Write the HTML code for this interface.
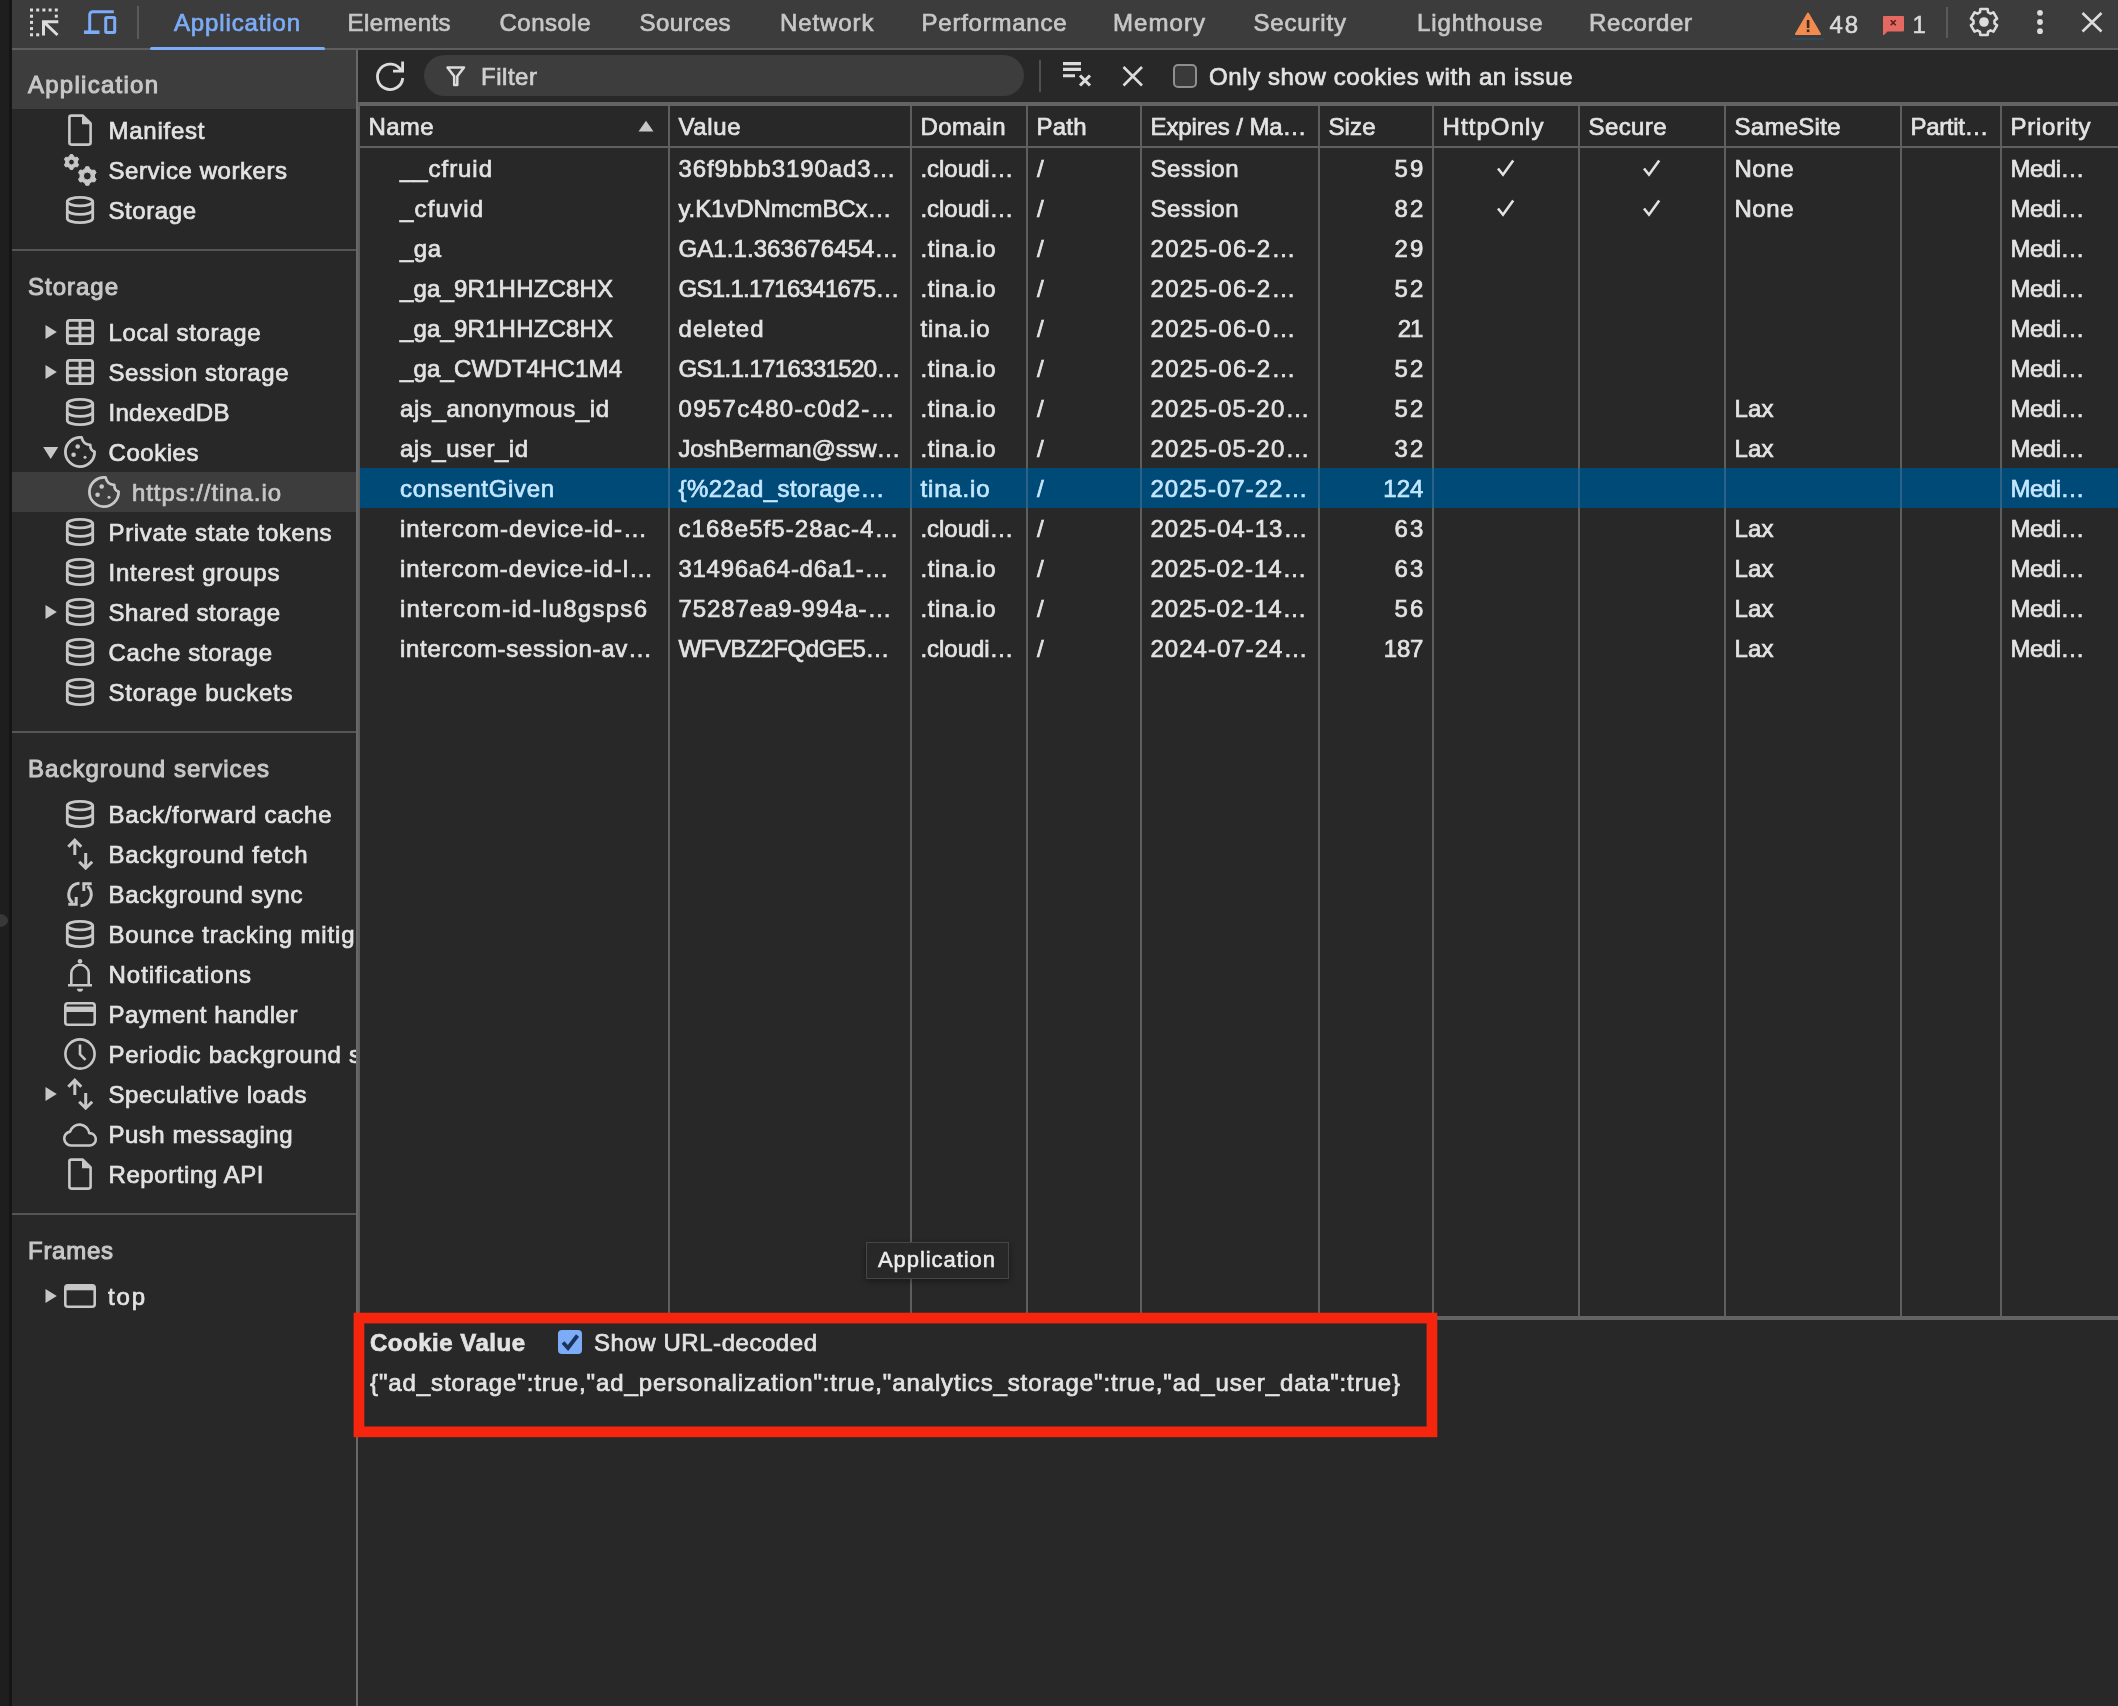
<!DOCTYPE html><html><head><meta charset="utf-8"><title>DevTools</title><style>html,body{margin:0;padding:0;background:#282828;}body{width:2118px;height:1706px;position:relative;overflow:hidden;font-family:"Liberation Sans",sans-serif;font-size:24px;}svg{overflow:visible}</style></head><body>
<div style="position:absolute;left:0px;top:0px;width:2118px;height:1706px;background:#282828;"></div>
<div style="position:absolute;left:0px;top:0px;width:9px;height:1706px;background:#1e1e1e;"></div>
<div style="position:absolute;left:9px;top:0px;width:3px;height:1706px;background:#151515;"></div>
<div style="position:absolute;left:12px;top:0px;width:2106px;height:48px;background:#3c3c3c;"></div>
<div style="position:absolute;left:12px;top:48px;width:2106px;height:2px;background:#5e5e5e;"></div>
<div style="position:absolute;left:12px;top:50px;width:344px;height:59px;background:#3d3d3d;"></div>
<div style="position:absolute;left:356px;top:50px;width:2px;height:1656px;background:#686868;"></div>
<div style="position:absolute;left:358px;top:102px;width:2px;height:1218px;background:#5e5e5e;"></div>
<div style="position:absolute;left:360px;top:102px;width:1758px;height:4px;background:#636363;"></div>
<svg style="position:absolute;left:0px;top:0px" width="70" height="48" viewBox="0 0 70 48" fill="none"><rect x="30" y="8.5" width="3" height="3" fill="#dcdcdc"/><rect x="36.2" y="8.5" width="3" height="3" fill="#dcdcdc"/><rect x="42.4" y="8.5" width="3" height="3" fill="#dcdcdc"/><rect x="48.6" y="8.5" width="3" height="3" fill="#dcdcdc"/><rect x="54.8" y="8.5" width="3" height="3" fill="#dcdcdc"/><rect x="30" y="14.7" width="3" height="3" fill="#dcdcdc"/><rect x="30" y="20.9" width="3" height="3" fill="#dcdcdc"/><rect x="30" y="27.1" width="3" height="3" fill="#dcdcdc"/><rect x="30" y="33.3" width="3" height="3" fill="#dcdcdc"/><rect x="36.2" y="33.3" width="3" height="3" fill="#dcdcdc"/><rect x="54.8" y="14.7" width="3" height="3" fill="#dcdcdc"/><path d="M43.5 35.5V21.7H58.3M44 22.2L57.5 35" stroke="#dcdcdc" stroke-width="3"/></svg>
<svg style="position:absolute;left:0px;top:0px" width="130" height="48" viewBox="0 0 130 48" fill="none"><path d="M113.8 11.8H92.700a3 3 0 0 0-3 3V31" stroke="#7cacf8" stroke-width="3"/><path d="M84 32.2H99.5" stroke="#7cacf8" stroke-width="3.6"/><rect x="105.7" y="17.5" width="9" height="15" rx="1" stroke="#7cacf8" stroke-width="3"/></svg>
<div style="position:absolute;left:137px;top:6px;width:2px;height:33px;background:#5a5a5a;"></div>
<div style="position:absolute;left:150px;top:47px;width:175px;height:3.2px;background:#7cacf8;border-radius:1.600px;"></div>
<svg style="position:absolute;left:1790px;top:8px" width="36" height="32" viewBox="0 0 36 32" fill="none"><path d="M18 5.5L30 26H6Z" fill="#f28b50" stroke="#f28b50" stroke-width="2" stroke-linejoin="round"/><rect x="16.8" y="12" width="2.6" height="8" fill="#3c2a20"/><rect x="16.8" y="21.5" width="2.6" height="2.6" fill="#3c2a20"/></svg>
<div style="position:absolute;left:1792px;top:37.5px;width:32px;height:2px;background:#30485a;"></div>
<svg style="position:absolute;left:1878px;top:10px" width="32" height="30" viewBox="0 0 32 30" fill="none"><path d="M5.5 6.5H25.5V21H9.5L5.5 25Z" fill="#e46962" stroke="#e46962" stroke-width="1" stroke-linejoin="round"/><path d="M12.7 10.3l5 5m0-5l-5 5" stroke="#5a1f1c" stroke-width="1.6"/></svg>
<div style="position:absolute;left:1946px;top:7px;width:2px;height:31px;background:#5a5a5a;"></div>
<svg style="position:absolute;left:1964px;top:2px" width="40" height="40" viewBox="0 0 40 40" fill="none"><path d="M15.99 10.19L16.37 7.00L23.63 7.00L24.01 10.19L26.50 11.62L29.45 10.35L33.08 16.64L30.50 18.56L30.50 21.44L33.08 23.36L29.45 29.65L26.50 28.38L24.01 29.81L23.63 33.00L16.37 33.00L15.99 29.81L13.50 28.38L10.55 29.65L6.92 23.36L9.50 21.44L9.50 18.56L6.92 16.64L10.55 10.35L13.50 11.62Z" stroke="#dcdcdc" stroke-width="2.6" stroke-linejoin="round"/><circle cx="20" cy="20" r="4.8" fill="#dcdcdc"/></svg>
<svg style="position:absolute;left:2030px;top:4px" width="20" height="40" viewBox="0 0 20 40" fill="none"><circle cx="10" cy="8.8" r="2.9" fill="#dcdcdc"/><circle cx="10" cy="18" r="2.9" fill="#dcdcdc"/><circle cx="10" cy="27.2" r="2.9" fill="#dcdcdc"/></svg>
<svg style="position:absolute;left:2076px;top:6px" width="32" height="32" viewBox="0 0 32 32" fill="none"><path d="M6.5 7L25.5 25.5M25.5 7L6.5 25.5" stroke="#dcdcdc" stroke-width="2.6"/></svg>
<svg style="position:absolute;left:370px;top:56px" width="40" height="40" viewBox="0 0 40 40" fill="none"><path d="M31.2 14.5A12.7 12.7 0 1 0 32.8 22" stroke="#dcdcdc" stroke-width="2.8"/><path d="M32.6 5.5V15.2H23" stroke="#dcdcdc" stroke-width="2.8"/></svg>
<div style="position:absolute;left:424px;top:55px;width:600px;height:41px;background:#3d3d3d;border-radius:21px;"></div>
<svg style="position:absolute;left:440px;top:60px" width="32" height="32" viewBox="0 0 32 32" fill="none"><path d="M7.5 7.5H24L17.3 16.3V25H14.2V16.3Z" stroke="#dcdcdc" stroke-width="2.5" stroke-linejoin="round"/></svg>
<div style="position:absolute;left:1039px;top:60px;width:2px;height:32px;background:#505050;"></div>
<svg style="position:absolute;left:1058px;top:56px" width="40" height="40" viewBox="0 0 40 40" fill="none"><path d="M5 7.600H23M5 13.400H23M5 19.800H17" stroke="#dcdcdc" stroke-width="3.1"/><path d="M22 19.500l10 10m0-10L22 29.500" stroke="#dcdcdc" stroke-width="3.1"/></svg>
<svg style="position:absolute;left:1116px;top:60px" width="32" height="32" viewBox="0 0 32 32" fill="none"><path d="M7.5 7L26 25.5M26 7L7.5 25.5" stroke="#dcdcdc" stroke-width="2.6"/></svg>
<div style="position:absolute;left:1173px;top:64px;width:20px;height:20px;border:2px solid #8f8f8f;border-radius:5px;background:#3a3a3a"></div>
<svg style="position:absolute;left:60px;top:110px" width="40" height="40" viewBox="0 0 40 40" fill="none"><path d="M9.4 7.6a2 2 0 0 1 2-2H22.8L30.6 13.4V32.6a2 2 0 0 1-2 2H11.4a2 2 0 0 1-2-2Z" stroke="#c7c7c7" stroke-width="2.6" stroke-linejoin="round"/><path d="M22 5.6V14.2H30.6Z" fill="#c7c7c7"/></svg>
<svg style="position:absolute;left:60px;top:150px" width="40" height="40" viewBox="0 0 40 40" fill="none"><path d="M9.39 6.54L10.31 4.54L12.69 4.54L13.61 6.54L15.21 7.46L17.41 7.27L18.60 9.33L17.33 11.13L17.33 12.97L18.60 14.77L17.41 16.83L15.21 16.64L13.61 17.56L12.69 19.56L10.31 19.56L9.39 17.56L7.79 16.64L5.59 16.83L4.40 14.77L5.67 12.97L5.67 11.13L4.40 9.33L5.59 7.27L7.79 7.46Z M8.60 12.05 a2.9 2.9 0 1 0 5.8 0 a2.9 2.9 0 1 0 -5.8 0Z" fill="#c7c7c7" stroke="#c7c7c7" stroke-width="1" stroke-linejoin="round" fill-rule="evenodd"/><path d="M24.68 19.18L25.83 16.72L28.77 16.72L29.92 19.18L31.89 20.33L34.61 20.08L36.08 22.63L34.51 24.86L34.51 27.14L36.08 29.37L34.61 31.92L31.89 31.67L29.92 32.82L28.77 35.28L25.83 35.28L24.68 32.82L22.71 31.67L19.99 31.92L18.52 29.37L20.09 27.14L20.09 24.86L18.52 22.63L19.99 20.08L22.71 20.33Z M23.40 26.00 a3.9 3.9 0 1 0 7.8 0 a3.9 3.9 0 1 0 -7.8 0Z" fill="#c7c7c7" stroke="#c7c7c7" stroke-width="1" stroke-linejoin="round" fill-rule="evenodd"/></svg>
<svg style="position:absolute;left:60px;top:190px" width="40" height="40" viewBox="0 0 40 40" fill="none"><ellipse cx="20" cy="11.6" rx="12.7" ry="4.3" stroke="#c7c7c7" stroke-width="2.8"/><path d="M7.3 11.6V28.4c0 2.4 5.7 4.3 12.7 4.3s12.7-1.9 12.7-4.3V11.6" stroke="#c7c7c7" stroke-width="2.8"/><path d="M7.3 20c0 2.4 5.7 4.3 12.7 4.3s12.7-1.9 12.7-4.3" stroke="#c7c7c7" stroke-width="2.8"/></svg>
<div style="position:absolute;left:12px;top:249px;width:344px;height:2px;background:#555555;"></div>
<div style="position:absolute;left:12px;top:472px;width:344px;height:40px;background:#3d3d3d;"></div>
<svg style="position:absolute;left:60px;top:312px" width="40" height="40" viewBox="0 0 40 40" fill="none"><rect x="7.4" y="8.4" width="25.2" height="23.2" rx="2.5" stroke="#c7c7c7" stroke-width="2.9"/><path d="M20 8.4V31.6M7.4 16.2H32.6M7.4 23.8H32.6" stroke="#c7c7c7" stroke-width="2.9"/></svg>
<svg style="position:absolute;left:40px;top:320px" width="24" height="24" viewBox="0 0 24 24" fill="none"><path d="M5.500 5L16.800 12L5.500 19Z" fill="#c7c7c7"/></svg>
<svg style="position:absolute;left:60px;top:352px" width="40" height="40" viewBox="0 0 40 40" fill="none"><rect x="7.4" y="8.4" width="25.2" height="23.2" rx="2.5" stroke="#c7c7c7" stroke-width="2.9"/><path d="M20 8.4V31.6M7.4 16.2H32.6M7.4 23.8H32.6" stroke="#c7c7c7" stroke-width="2.9"/></svg>
<svg style="position:absolute;left:40px;top:360px" width="24" height="24" viewBox="0 0 24 24" fill="none"><path d="M5.500 5L16.800 12L5.500 19Z" fill="#c7c7c7"/></svg>
<svg style="position:absolute;left:60px;top:392px" width="40" height="40" viewBox="0 0 40 40" fill="none"><ellipse cx="20" cy="11.6" rx="12.7" ry="4.3" stroke="#c7c7c7" stroke-width="2.8"/><path d="M7.3 11.6V28.4c0 2.4 5.7 4.3 12.7 4.3s12.7-1.9 12.7-4.3V11.6" stroke="#c7c7c7" stroke-width="2.8"/><path d="M7.3 20c0 2.4 5.7 4.3 12.7 4.3s12.7-1.9 12.7-4.3" stroke="#c7c7c7" stroke-width="2.8"/></svg>
<svg style="position:absolute;left:60px;top:432px" width="40" height="40" viewBox="0 0 40 40" fill="none"><path d="M21.6 5.5A14.6 14.6 0 1 0 34.6 19.6Q30.400 19 30.200 12.800Q23.500 13 21.600 5.500Z" stroke="#c7c7c7" stroke-width="2.8" stroke-linejoin="round"/><circle cx="17.7" cy="14.5" r="2.3" fill="#c7c7c7"/><circle cx="13.6" cy="22.7" r="2.3" fill="#c7c7c7"/><circle cx="25" cy="25.2" r="1.5" fill="#c7c7c7"/></svg>
<svg style="position:absolute;left:38px;top:440px" width="26" height="24" viewBox="0 0 26 24" fill="none"><path d="M5.200 7H20.200L12.700 19Z" fill="#c7c7c7"/></svg>
<svg style="position:absolute;left:60px;top:512px" width="40" height="40" viewBox="0 0 40 40" fill="none"><ellipse cx="20" cy="11.6" rx="12.7" ry="4.3" stroke="#c7c7c7" stroke-width="2.8"/><path d="M7.3 11.6V28.4c0 2.4 5.7 4.3 12.7 4.3s12.7-1.9 12.7-4.3V11.6" stroke="#c7c7c7" stroke-width="2.8"/><path d="M7.3 20c0 2.4 5.7 4.3 12.7 4.3s12.7-1.9 12.7-4.3" stroke="#c7c7c7" stroke-width="2.8"/></svg>
<svg style="position:absolute;left:60px;top:552px" width="40" height="40" viewBox="0 0 40 40" fill="none"><ellipse cx="20" cy="11.6" rx="12.7" ry="4.3" stroke="#c7c7c7" stroke-width="2.8"/><path d="M7.3 11.6V28.4c0 2.4 5.7 4.3 12.7 4.3s12.7-1.9 12.7-4.3V11.6" stroke="#c7c7c7" stroke-width="2.8"/><path d="M7.3 20c0 2.4 5.7 4.3 12.7 4.3s12.7-1.9 12.7-4.3" stroke="#c7c7c7" stroke-width="2.8"/></svg>
<svg style="position:absolute;left:60px;top:592px" width="40" height="40" viewBox="0 0 40 40" fill="none"><ellipse cx="20" cy="11.6" rx="12.7" ry="4.3" stroke="#c7c7c7" stroke-width="2.8"/><path d="M7.3 11.6V28.4c0 2.4 5.7 4.3 12.7 4.3s12.7-1.9 12.7-4.3V11.6" stroke="#c7c7c7" stroke-width="2.8"/><path d="M7.3 20c0 2.4 5.7 4.3 12.7 4.3s12.7-1.9 12.7-4.3" stroke="#c7c7c7" stroke-width="2.8"/></svg>
<svg style="position:absolute;left:40px;top:600px" width="24" height="24" viewBox="0 0 24 24" fill="none"><path d="M5.500 5L16.800 12L5.500 19Z" fill="#c7c7c7"/></svg>
<svg style="position:absolute;left:60px;top:632px" width="40" height="40" viewBox="0 0 40 40" fill="none"><ellipse cx="20" cy="11.6" rx="12.7" ry="4.3" stroke="#c7c7c7" stroke-width="2.8"/><path d="M7.3 11.6V28.4c0 2.4 5.7 4.3 12.7 4.3s12.7-1.9 12.7-4.3V11.6" stroke="#c7c7c7" stroke-width="2.8"/><path d="M7.3 20c0 2.4 5.7 4.3 12.7 4.3s12.7-1.9 12.7-4.3" stroke="#c7c7c7" stroke-width="2.8"/></svg>
<svg style="position:absolute;left:60px;top:672px" width="40" height="40" viewBox="0 0 40 40" fill="none"><ellipse cx="20" cy="11.6" rx="12.7" ry="4.3" stroke="#c7c7c7" stroke-width="2.8"/><path d="M7.3 11.6V28.4c0 2.4 5.7 4.3 12.7 4.3s12.7-1.9 12.7-4.3V11.6" stroke="#c7c7c7" stroke-width="2.8"/><path d="M7.3 20c0 2.4 5.7 4.3 12.7 4.3s12.7-1.9 12.7-4.3" stroke="#c7c7c7" stroke-width="2.8"/></svg>
<svg style="position:absolute;left:84px;top:472px" width="40" height="40" viewBox="0 0 40 40" fill="none"><path d="M21.6 5.5A14.6 14.6 0 1 0 34.6 19.6Q30.400 19 30.200 12.800Q23.500 13 21.600 5.500Z" stroke="#c7c7c7" stroke-width="2.8" stroke-linejoin="round"/><circle cx="17.7" cy="14.5" r="2.3" fill="#c7c7c7"/><circle cx="13.6" cy="22.7" r="2.3" fill="#c7c7c7"/><circle cx="25" cy="25.2" r="1.5" fill="#c7c7c7"/></svg>
<div style="position:absolute;left:12px;top:731px;width:344px;height:2px;background:#555555;"></div>
<svg style="position:absolute;left:60px;top:794px" width="40" height="40" viewBox="0 0 40 40" fill="none"><ellipse cx="20" cy="11.6" rx="12.7" ry="4.3" stroke="#c7c7c7" stroke-width="2.8"/><path d="M7.3 11.6V28.4c0 2.4 5.7 4.3 12.7 4.3s12.7-1.9 12.7-4.3V11.6" stroke="#c7c7c7" stroke-width="2.8"/><path d="M7.3 20c0 2.4 5.7 4.3 12.7 4.3s12.7-1.9 12.7-4.3" stroke="#c7c7c7" stroke-width="2.8"/></svg>
<svg style="position:absolute;left:60px;top:834px" width="40" height="40" viewBox="0 0 40 40" fill="none"><path d="M14.800 21V6.5M8.300 12.700L14.800 6.200L21.300 12.700" stroke="#c7c7c7" stroke-width="3"/><path d="M25.700 19V34M19.200 27.700L25.700 34.200L32.200 27.700" stroke="#c7c7c7" stroke-width="3"/></svg>
<svg style="position:absolute;left:60px;top:874px" width="40" height="40" viewBox="0 0 40 40" fill="none"><path d="M19.5 9.300A11.200 11.200 0 0 0 12.600 28.900" stroke="#c7c7c7" stroke-width="3"/><path d="M8.300 30.300H16.200V23" stroke="#c7c7c7" stroke-width="3"/><path d="M20.500 31.700A11.200 11.200 0 0 0 27.400 12.100" stroke="#c7c7c7" stroke-width="3"/><path d="M31.700 9.700H23.800V17" stroke="#c7c7c7" stroke-width="3"/></svg>
<svg style="position:absolute;left:60px;top:914px" width="40" height="40" viewBox="0 0 40 40" fill="none"><ellipse cx="20" cy="11.6" rx="12.7" ry="4.3" stroke="#c7c7c7" stroke-width="2.8"/><path d="M7.3 11.6V28.4c0 2.4 5.7 4.3 12.7 4.3s12.7-1.9 12.7-4.3V11.6" stroke="#c7c7c7" stroke-width="2.8"/><path d="M7.3 20c0 2.4 5.7 4.3 12.7 4.3s12.7-1.9 12.7-4.3" stroke="#c7c7c7" stroke-width="2.8"/></svg>
<svg style="position:absolute;left:60px;top:954px" width="40" height="40" viewBox="0 0 40 40" fill="none"><path d="M8 31.300H32M11.300 31V19.500a8.700 8.700 0 0 1 17.400 0V31" stroke="#c7c7c7" stroke-width="2.6" stroke-linejoin="round"/><circle cx="20" cy="7.300" r="2.300" fill="#c7c7c7"/><path d="M17 34.800H23a3 3 0 0 1-6 0Z" fill="#c7c7c7"/></svg>
<svg style="position:absolute;left:60px;top:994px" width="40" height="40" viewBox="0 0 40 40" fill="none"><rect x="5.300" y="9.300" width="29.400" height="21.400" rx="2.500" stroke="#c7c7c7" stroke-width="2.6"/><rect x="5.300" y="12.600" width="29.400" height="5.400" fill="#c7c7c7"/></svg>
<svg style="position:absolute;left:60px;top:1034px" width="40" height="40" viewBox="0 0 40 40" fill="none"><circle cx="20" cy="20" r="14.600" stroke="#c7c7c7" stroke-width="2.6"/><path d="M20 10.500V20.300L25.500 25.800" stroke="#c7c7c7" stroke-width="2.6"/></svg>
<svg style="position:absolute;left:60px;top:1074px" width="40" height="40" viewBox="0 0 40 40" fill="none"><path d="M14.800 21V6.5M8.300 12.700L14.800 6.200L21.300 12.700" stroke="#c7c7c7" stroke-width="3"/><path d="M25.700 19V34M19.200 27.700L25.700 34.200L32.200 27.700" stroke="#c7c7c7" stroke-width="3"/></svg>
<svg style="position:absolute;left:40px;top:1082px" width="24" height="24" viewBox="0 0 24 24" fill="none"><path d="M5.500 5L16.800 12L5.500 19Z" fill="#c7c7c7"/></svg>
<svg style="position:absolute;left:60px;top:1114px" width="40" height="40" viewBox="0 0 40 40" fill="none"><path d="M11 31.500a7 7 0 0 1-.9-13.900a9.800 9.800 0 0 1 19.100 1.500a6.200 6.200 0 0 1 .8 12.400Z" stroke="#c7c7c7" stroke-width="2.6" stroke-linejoin="round"/></svg>
<svg style="position:absolute;left:60px;top:1154px" width="40" height="40" viewBox="0 0 40 40" fill="none"><path d="M9.4 7.6a2 2 0 0 1 2-2H22.8L30.6 13.4V32.6a2 2 0 0 1-2 2H11.4a2 2 0 0 1-2-2Z" stroke="#c7c7c7" stroke-width="2.6" stroke-linejoin="round"/><path d="M22 5.6V14.2H30.6Z" fill="#c7c7c7"/></svg>
<div style="position:absolute;left:12px;top:1213px;width:344px;height:2px;background:#555555;"></div>
<svg style="position:absolute;left:60px;top:1276px" width="40" height="40" viewBox="0 0 40 40" fill="none"><rect x="5.300" y="9.300" width="29.400" height="21.400" rx="2.500" stroke="#c7c7c7" stroke-width="2.6"/><rect x="5.300" y="9.300" width="29.400" height="5" fill="#c7c7c7"/></svg>
<svg style="position:absolute;left:40px;top:1284px" width="24" height="24" viewBox="0 0 24 24" fill="none"><path d="M5.500 5L16.800 12L5.500 19Z" fill="#c7c7c7"/></svg>
<div style="position:absolute;left:-8px;top:913.500px;width:16px;height:13px;border-radius:50%;background:#383838"></div>
<div style="position:absolute;left:668px;top:106px;width:2px;height:1210px;background:#5e5e5e;"></div>
<div style="position:absolute;left:910px;top:106px;width:2px;height:1210px;background:#5e5e5e;"></div>
<div style="position:absolute;left:1026px;top:106px;width:2px;height:1210px;background:#5e5e5e;"></div>
<div style="position:absolute;left:1140px;top:106px;width:2px;height:1210px;background:#5e5e5e;"></div>
<div style="position:absolute;left:1318px;top:106px;width:2px;height:1210px;background:#5e5e5e;"></div>
<div style="position:absolute;left:1432px;top:106px;width:2px;height:1210px;background:#5e5e5e;"></div>
<div style="position:absolute;left:1578px;top:106px;width:2px;height:1210px;background:#5e5e5e;"></div>
<div style="position:absolute;left:1724px;top:106px;width:2px;height:1210px;background:#5e5e5e;"></div>
<div style="position:absolute;left:1900px;top:106px;width:2px;height:1210px;background:#5e5e5e;"></div>
<div style="position:absolute;left:2000px;top:106px;width:2px;height:1210px;background:#5e5e5e;"></div>
<div style="position:absolute;left:360px;top:146px;width:1758px;height:2px;background:#606060;"></div>
<div style="position:absolute;left:360px;top:1316px;width:1758px;height:4px;background:#636363;"></div>
<div style="position:absolute;left:360px;top:468px;width:1758px;height:40px;background:#004a77;"></div>
<div style="position:absolute;left:668px;top:468px;width:2px;height:40px;background:#2d6288;"></div>
<div style="position:absolute;left:910px;top:468px;width:2px;height:40px;background:#2d6288;"></div>
<div style="position:absolute;left:1026px;top:468px;width:2px;height:40px;background:#2d6288;"></div>
<div style="position:absolute;left:1140px;top:468px;width:2px;height:40px;background:#2d6288;"></div>
<div style="position:absolute;left:1318px;top:468px;width:2px;height:40px;background:#2d6288;"></div>
<div style="position:absolute;left:1432px;top:468px;width:2px;height:40px;background:#2d6288;"></div>
<div style="position:absolute;left:1578px;top:468px;width:2px;height:40px;background:#2d6288;"></div>
<div style="position:absolute;left:1724px;top:468px;width:2px;height:40px;background:#2d6288;"></div>
<div style="position:absolute;left:1900px;top:468px;width:2px;height:40px;background:#2d6288;"></div>
<div style="position:absolute;left:2000px;top:468px;width:2px;height:40px;background:#2d6288;"></div>
<svg style="position:absolute;left:634px;top:116px" width="24" height="20" viewBox="0 0 24 20" fill="none"><path d="M4.500 15.500L12 4.800L19.500 15.500Z" fill="#c7c7c7"/></svg>
<svg style="position:absolute;left:1493px;top:156px" width="24" height="24" viewBox="0 0 24 24" fill="none"><path d="M5 12.500L10 18.700L20.200 4.500" stroke="#e3e3e3" stroke-width="2.6"/></svg>
<svg style="position:absolute;left:1639px;top:156px" width="24" height="24" viewBox="0 0 24 24" fill="none"><path d="M5 12.500L10 18.700L20.200 4.500" stroke="#e3e3e3" stroke-width="2.6"/></svg>
<svg style="position:absolute;left:1493px;top:196px" width="24" height="24" viewBox="0 0 24 24" fill="none"><path d="M5 12.500L10 18.700L20.200 4.500" stroke="#e3e3e3" stroke-width="2.6"/></svg>
<svg style="position:absolute;left:1639px;top:196px" width="24" height="24" viewBox="0 0 24 24" fill="none"><path d="M5 12.500L10 18.700L20.200 4.500" stroke="#e3e3e3" stroke-width="2.6"/></svg>
<div style="position:absolute;left:866px;top:1242px;width:141px;height:35px;background:#282828;border:1px solid #464646;box-shadow:0 2px 6px rgba(0,0,0,.4)"></div>
<div style="position:absolute;left:558px;top:1330px;width:24px;height:24px;border-radius:4px;background:#7cacf8"></div>
<svg style="position:absolute;left:558px;top:1330px" width="24" height="24" viewBox="0 0 24 24" fill="none"><path d="M5 12.500L10 18L19.500 5.500" stroke="#1b3358" stroke-width="3.800"/></svg>
<svg style="position:absolute;left:0px;top:0px" width="2118" height="1706" viewBox="0 0 2118 1706" fill="none"><rect x="358.95" y="1318.05" width="1073" height="113.8" stroke="#f5260d" stroke-width="10.7"/></svg>
<div style="position:absolute;left:0;top:0;width:2118px;height:1706px;will-change:transform">
<div style="position:absolute;top:3px;height:40px;line-height:40px;white-space:pre;font-size:24px;color:#7cacf8;letter-spacing:0.858px;-webkit-text-stroke:0.7px #7cacf8;left:174px;">Application</div>
<div style="position:absolute;top:3px;height:40px;line-height:40px;white-space:pre;font-size:24px;color:#c7c7c7;letter-spacing:0.422px;-webkit-text-stroke:0.7px #c7c7c7;left:347.5px;">Elements</div>
<div style="position:absolute;top:3px;height:40px;line-height:40px;white-space:pre;font-size:24px;color:#c7c7c7;letter-spacing:0.490px;-webkit-text-stroke:0.7px #c7c7c7;left:499.5px;">Console</div>
<div style="position:absolute;top:3px;height:40px;line-height:40px;white-space:pre;font-size:24px;color:#c7c7c7;letter-spacing:0.492px;-webkit-text-stroke:0.7px #c7c7c7;left:639.5px;">Sources</div>
<div style="position:absolute;top:3px;height:40px;line-height:40px;white-space:pre;font-size:24px;color:#c7c7c7;letter-spacing:0.911px;-webkit-text-stroke:0.7px #c7c7c7;left:780px;">Network</div>
<div style="position:absolute;top:3px;height:40px;line-height:40px;white-space:pre;font-size:24px;color:#c7c7c7;letter-spacing:0.761px;-webkit-text-stroke:0.7px #c7c7c7;left:921.5px;">Performance</div>
<div style="position:absolute;top:3px;height:40px;line-height:40px;white-space:pre;font-size:24px;color:#c7c7c7;letter-spacing:1.066px;-webkit-text-stroke:0.7px #c7c7c7;left:1113px;">Memory</div>
<div style="position:absolute;top:3px;height:40px;line-height:40px;white-space:pre;font-size:24px;color:#c7c7c7;letter-spacing:0.828px;-webkit-text-stroke:0.7px #c7c7c7;left:1253.5px;">Security</div>
<div style="position:absolute;top:3px;height:40px;line-height:40px;white-space:pre;font-size:24px;color:#c7c7c7;letter-spacing:0.896px;-webkit-text-stroke:0.7px #c7c7c7;left:1417px;">Lighthouse</div>
<div style="position:absolute;top:3px;height:40px;line-height:40px;white-space:pre;font-size:24px;color:#c7c7c7;letter-spacing:0.612px;-webkit-text-stroke:0.7px #c7c7c7;left:1589px;">Recorder</div>
<div style="position:absolute;top:4.5px;height:40px;line-height:40px;white-space:pre;font-size:24px;color:#dadada;letter-spacing:2.000px;-webkit-text-stroke:0.55px #dadada;left:1829.5px;">48</div>
<div style="position:absolute;top:4.5px;height:40px;line-height:40px;white-space:pre;font-size:24px;color:#dadada;letter-spacing:0.000px;-webkit-text-stroke:0.55px #dadada;left:1912.5px;">1</div>
<div style="position:absolute;top:57px;height:40px;line-height:40px;white-space:pre;font-size:24px;color:#d0d0d0;letter-spacing:0.531px;-webkit-text-stroke:0.7px #d0d0d0;left:481px;">Filter</div>
<div style="position:absolute;top:57px;height:40px;line-height:40px;white-space:pre;font-size:24px;color:#e3e3e3;letter-spacing:0.600px;-webkit-text-stroke:0.7px #e3e3e3;left:1209px;">Only show cookies with an issue</div>
<div style="position:absolute;top:65px;height:40px;line-height:40px;white-space:pre;font-size:24px;color:#c7c7c7;letter-spacing:1.258px;-webkit-text-stroke:1px #c7c7c7;left:28px;">Application</div>
<div style="position:absolute;top:111px;height:40px;line-height:40px;white-space:pre;font-size:24px;color:#e3e3e3;letter-spacing:0.757px;-webkit-text-stroke:0.7px #e3e3e3;left:108.5px;">Manifest</div>
<div style="position:absolute;top:151px;height:40px;line-height:40px;white-space:pre;font-size:24px;color:#e3e3e3;letter-spacing:0.556px;-webkit-text-stroke:0.7px #e3e3e3;left:108.5px;">Service workers</div>
<div style="position:absolute;top:191px;height:40px;line-height:40px;white-space:pre;font-size:24px;color:#e3e3e3;letter-spacing:0.573px;-webkit-text-stroke:0.7px #e3e3e3;left:108.5px;">Storage</div>
<div style="position:absolute;top:267px;height:40px;line-height:40px;white-space:pre;font-size:24px;color:#c7c7c7;letter-spacing:0.990px;-webkit-text-stroke:1px #c7c7c7;left:28px;">Storage</div>
<div style="position:absolute;top:313px;height:40px;line-height:40px;white-space:pre;font-size:24px;color:#e3e3e3;letter-spacing:0.659px;-webkit-text-stroke:0.7px #e3e3e3;left:108.5px;">Local storage</div>
<div style="position:absolute;top:353px;height:40px;line-height:40px;white-space:pre;font-size:24px;color:#e3e3e3;letter-spacing:0.564px;-webkit-text-stroke:0.7px #e3e3e3;left:108.5px;">Session storage</div>
<div style="position:absolute;top:393px;height:40px;line-height:40px;white-space:pre;font-size:24px;color:#e3e3e3;letter-spacing:0.281px;-webkit-text-stroke:0.7px #e3e3e3;left:108.5px;">IndexedDB</div>
<div style="position:absolute;top:433px;height:40px;line-height:40px;white-space:pre;font-size:24px;color:#e3e3e3;letter-spacing:0.547px;-webkit-text-stroke:0.7px #e3e3e3;left:108.5px;">Cookies</div>
<div style="position:absolute;top:513px;height:40px;line-height:40px;white-space:pre;font-size:24px;color:#e3e3e3;letter-spacing:0.643px;-webkit-text-stroke:0.7px #e3e3e3;left:108.5px;">Private state tokens</div>
<div style="position:absolute;top:553px;height:40px;line-height:40px;white-space:pre;font-size:24px;color:#e3e3e3;letter-spacing:0.779px;-webkit-text-stroke:0.7px #e3e3e3;left:108.5px;">Interest groups</div>
<div style="position:absolute;top:593px;height:40px;line-height:40px;white-space:pre;font-size:24px;color:#e3e3e3;letter-spacing:0.569px;-webkit-text-stroke:0.7px #e3e3e3;left:108.5px;">Shared storage</div>
<div style="position:absolute;top:633px;height:40px;line-height:40px;white-space:pre;font-size:24px;color:#e3e3e3;letter-spacing:0.617px;-webkit-text-stroke:0.7px #e3e3e3;left:108.5px;">Cache storage</div>
<div style="position:absolute;top:673px;height:40px;line-height:40px;white-space:pre;font-size:24px;color:#e3e3e3;letter-spacing:0.754px;-webkit-text-stroke:0.7px #e3e3e3;left:108.5px;">Storage buckets</div>
<div style="position:absolute;top:473px;height:40px;line-height:40px;white-space:pre;font-size:24px;color:#c7c7c7;letter-spacing:0.923px;-webkit-text-stroke:0.7px #c7c7c7;left:132px;">https://tina.io</div>
<div style="position:absolute;top:749px;height:40px;line-height:40px;white-space:pre;font-size:24px;color:#c7c7c7;letter-spacing:1.012px;-webkit-text-stroke:1px #c7c7c7;left:28px;">Background services</div>
<div style="position:absolute;top:795px;height:40px;line-height:40px;white-space:pre;font-size:24px;color:#e3e3e3;letter-spacing:0.720px;-webkit-text-stroke:0.7px #e3e3e3;left:108.5px;width:247.5px;overflow:hidden;">Back/forward cache</div>
<div style="position:absolute;top:835px;height:40px;line-height:40px;white-space:pre;font-size:24px;color:#e3e3e3;letter-spacing:0.814px;-webkit-text-stroke:0.7px #e3e3e3;left:108.5px;width:247.5px;overflow:hidden;">Background fetch</div>
<div style="position:absolute;top:875px;height:40px;line-height:40px;white-space:pre;font-size:24px;color:#e3e3e3;letter-spacing:0.706px;-webkit-text-stroke:0.7px #e3e3e3;left:108.5px;width:247.5px;overflow:hidden;">Background sync</div>
<div style="position:absolute;top:915px;height:40px;line-height:40px;white-space:pre;font-size:24px;color:#e3e3e3;letter-spacing:0.827px;-webkit-text-stroke:0.7px #e3e3e3;left:108.5px;width:247.5px;overflow:hidden;">Bounce tracking mitig</div>
<div style="position:absolute;top:955px;height:40px;line-height:40px;white-space:pre;font-size:24px;color:#e3e3e3;letter-spacing:0.980px;-webkit-text-stroke:0.7px #e3e3e3;left:108.5px;width:247.5px;overflow:hidden;">Notifications</div>
<div style="position:absolute;top:995px;height:40px;line-height:40px;white-space:pre;font-size:24px;color:#e3e3e3;letter-spacing:0.539px;-webkit-text-stroke:0.7px #e3e3e3;left:108.5px;width:247.5px;overflow:hidden;">Payment handler</div>
<div style="position:absolute;top:1035px;height:40px;line-height:40px;white-space:pre;font-size:24px;color:#e3e3e3;letter-spacing:0.752px;-webkit-text-stroke:0.7px #e3e3e3;left:108.5px;width:247.5px;overflow:hidden;">Periodic background s</div>
<div style="position:absolute;top:1075px;height:40px;line-height:40px;white-space:pre;font-size:24px;color:#e3e3e3;letter-spacing:0.617px;-webkit-text-stroke:0.7px #e3e3e3;left:108.5px;width:247.5px;overflow:hidden;">Speculative loads</div>
<div style="position:absolute;top:1115px;height:40px;line-height:40px;white-space:pre;font-size:24px;color:#e3e3e3;letter-spacing:0.505px;-webkit-text-stroke:0.7px #e3e3e3;left:108.5px;width:247.5px;overflow:hidden;">Push messaging</div>
<div style="position:absolute;top:1155px;height:40px;line-height:40px;white-space:pre;font-size:24px;color:#e3e3e3;letter-spacing:0.576px;-webkit-text-stroke:0.7px #e3e3e3;left:108.5px;width:247.5px;overflow:hidden;">Reporting API</div>
<div style="position:absolute;top:1231px;height:40px;line-height:40px;white-space:pre;font-size:24px;color:#c7c7c7;letter-spacing:0.731px;-webkit-text-stroke:1px #c7c7c7;left:28px;">Frames</div>
<div style="position:absolute;top:1277px;height:40px;line-height:40px;white-space:pre;font-size:24px;color:#e3e3e3;letter-spacing:1.812px;-webkit-text-stroke:0.7px #e3e3e3;left:108px;">top</div>
<div style="position:absolute;top:107px;height:40px;line-height:40px;white-space:pre;font-size:24px;color:#e3e3e3;letter-spacing:0.323px;-webkit-text-stroke:0.7px #e3e3e3;left:368.5px;">Name</div>
<div style="position:absolute;top:107px;height:40px;line-height:40px;white-space:pre;font-size:24px;color:#e3e3e3;letter-spacing:0.598px;-webkit-text-stroke:0.7px #e3e3e3;left:678.5px;">Value</div>
<div style="position:absolute;top:107px;height:40px;line-height:40px;white-space:pre;font-size:24px;color:#e3e3e3;letter-spacing:0.459px;-webkit-text-stroke:0.7px #e3e3e3;left:920.5px;">Domain</div>
<div style="position:absolute;top:107px;height:40px;line-height:40px;white-space:pre;font-size:24px;color:#e3e3e3;letter-spacing:0.208px;-webkit-text-stroke:0.7px #e3e3e3;left:1036.5px;">Path</div>
<div style="position:absolute;top:107px;height:40px;line-height:40px;white-space:pre;font-size:24px;color:#e3e3e3;letter-spacing:-0.115px;-webkit-text-stroke:0.7px #e3e3e3;left:1150.5px;">Expires / Ma…</div>
<div style="position:absolute;top:107px;height:40px;line-height:40px;white-space:pre;font-size:24px;color:#e3e3e3;letter-spacing:0.104px;-webkit-text-stroke:0.7px #e3e3e3;left:1328.5px;">Size</div>
<div style="position:absolute;top:107px;height:40px;line-height:40px;white-space:pre;font-size:24px;color:#e3e3e3;letter-spacing:1.089px;-webkit-text-stroke:0.7px #e3e3e3;left:1442.5px;">HttpOnly</div>
<div style="position:absolute;top:107px;height:40px;line-height:40px;white-space:pre;font-size:24px;color:#e3e3e3;letter-spacing:0.391px;-webkit-text-stroke:0.7px #e3e3e3;left:1588.5px;">Secure</div>
<div style="position:absolute;top:107px;height:40px;line-height:40px;white-space:pre;font-size:24px;color:#e3e3e3;letter-spacing:0.277px;-webkit-text-stroke:0.7px #e3e3e3;left:1734.5px;">SameSite</div>
<div style="position:absolute;top:107px;height:40px;line-height:40px;white-space:pre;font-size:24px;color:#e3e3e3;letter-spacing:-0.336px;-webkit-text-stroke:0.7px #e3e3e3;left:1910.5px;">Partit…</div>
<div style="position:absolute;top:107px;height:40px;line-height:40px;white-space:pre;font-size:24px;color:#e3e3e3;letter-spacing:0.761px;-webkit-text-stroke:0.7px #e3e3e3;left:2010.5px;">Priority</div>
<div style="position:absolute;top:149px;height:40px;line-height:40px;white-space:pre;font-size:24px;color:#e3e3e3;letter-spacing:0.944px;-webkit-text-stroke:0.7px #e3e3e3;left:400px;">__cfruid</div>
<div style="position:absolute;top:149px;height:40px;line-height:40px;white-space:pre;font-size:24px;color:#e3e3e3;letter-spacing:0.915px;-webkit-text-stroke:0.7px #e3e3e3;left:678.5px;">36f9bbb3190ad3…</div>
<div style="position:absolute;top:149px;height:40px;line-height:40px;white-space:pre;font-size:24px;color:#e3e3e3;letter-spacing:-0.054px;-webkit-text-stroke:0.7px #e3e3e3;left:920.5px;">.cloudi…</div>
<div style="position:absolute;top:149px;height:40px;line-height:40px;white-space:pre;font-size:24px;color:#e3e3e3;letter-spacing:0.000px;-webkit-text-stroke:0.7px #e3e3e3;left:1037px;">/</div>
<div style="position:absolute;top:149px;height:40px;line-height:40px;white-space:pre;font-size:24px;color:#e3e3e3;letter-spacing:0.435px;-webkit-text-stroke:0.7px #e3e3e3;left:1150.5px;">Session</div>
<div style="position:absolute;top:149px;height:40px;line-height:40px;white-space:pre;font-size:24px;color:#e3e3e3;letter-spacing:2.000px;-webkit-text-stroke:0.7px #e3e3e3;right:694.7px;margin-right:-2.000px;">59</div>
<div style="position:absolute;top:149px;height:40px;line-height:40px;white-space:pre;font-size:24px;color:#e3e3e3;letter-spacing:0.542px;-webkit-text-stroke:0.7px #e3e3e3;left:1734.5px;">None</div>
<div style="position:absolute;top:149px;height:40px;line-height:40px;white-space:pre;font-size:24px;color:#e3e3e3;letter-spacing:-0.508px;-webkit-text-stroke:0.7px #e3e3e3;left:2010.5px;">Medi…</div>
<div style="position:absolute;top:189px;height:40px;line-height:40px;white-space:pre;font-size:24px;color:#e3e3e3;letter-spacing:1.159px;-webkit-text-stroke:0.7px #e3e3e3;left:400px;">_cfuvid</div>
<div style="position:absolute;top:189px;height:40px;line-height:40px;white-space:pre;font-size:24px;color:#e3e3e3;letter-spacing:-0.095px;-webkit-text-stroke:0.7px #e3e3e3;left:678.5px;">y.K1vDNmcmBCx…</div>
<div style="position:absolute;top:189px;height:40px;line-height:40px;white-space:pre;font-size:24px;color:#e3e3e3;letter-spacing:-0.054px;-webkit-text-stroke:0.7px #e3e3e3;left:920.5px;">.cloudi…</div>
<div style="position:absolute;top:189px;height:40px;line-height:40px;white-space:pre;font-size:24px;color:#e3e3e3;letter-spacing:0.000px;-webkit-text-stroke:0.7px #e3e3e3;left:1037px;">/</div>
<div style="position:absolute;top:189px;height:40px;line-height:40px;white-space:pre;font-size:24px;color:#e3e3e3;letter-spacing:0.435px;-webkit-text-stroke:0.7px #e3e3e3;left:1150.5px;">Session</div>
<div style="position:absolute;top:189px;height:40px;line-height:40px;white-space:pre;font-size:24px;color:#e3e3e3;letter-spacing:2.000px;-webkit-text-stroke:0.7px #e3e3e3;right:694.7px;margin-right:-2.000px;">82</div>
<div style="position:absolute;top:189px;height:40px;line-height:40px;white-space:pre;font-size:24px;color:#e3e3e3;letter-spacing:0.542px;-webkit-text-stroke:0.7px #e3e3e3;left:1734.5px;">None</div>
<div style="position:absolute;top:189px;height:40px;line-height:40px;white-space:pre;font-size:24px;color:#e3e3e3;letter-spacing:-0.508px;-webkit-text-stroke:0.7px #e3e3e3;left:2010.5px;">Medi…</div>
<div style="position:absolute;top:229px;height:40px;line-height:40px;white-space:pre;font-size:24px;color:#e3e3e3;letter-spacing:0.477px;-webkit-text-stroke:0.7px #e3e3e3;left:400px;">_ga</div>
<div style="position:absolute;top:229px;height:40px;line-height:40px;white-space:pre;font-size:24px;color:#e3e3e3;letter-spacing:0.077px;-webkit-text-stroke:0.7px #e3e3e3;left:678.5px;">GA1.1.363676454…</div>
<div style="position:absolute;top:229px;height:40px;line-height:40px;white-space:pre;font-size:24px;color:#e3e3e3;letter-spacing:0.612px;-webkit-text-stroke:0.7px #e3e3e3;left:920.5px;">.tina.io</div>
<div style="position:absolute;top:229px;height:40px;line-height:40px;white-space:pre;font-size:24px;color:#e3e3e3;letter-spacing:0.000px;-webkit-text-stroke:0.7px #e3e3e3;left:1037px;">/</div>
<div style="position:absolute;top:229px;height:40px;line-height:40px;white-space:pre;font-size:24px;color:#e3e3e3;letter-spacing:1.286px;-webkit-text-stroke:0.7px #e3e3e3;left:1150.5px;">2025-06-2…</div>
<div style="position:absolute;top:229px;height:40px;line-height:40px;white-space:pre;font-size:24px;color:#e3e3e3;letter-spacing:2.000px;-webkit-text-stroke:0.7px #e3e3e3;right:694.7px;margin-right:-2.000px;">29</div>
<div style="position:absolute;top:229px;height:40px;line-height:40px;white-space:pre;font-size:24px;color:#e3e3e3;letter-spacing:-0.508px;-webkit-text-stroke:0.7px #e3e3e3;left:2010.5px;">Medi…</div>
<div style="position:absolute;top:269px;height:40px;line-height:40px;white-space:pre;font-size:24px;color:#e3e3e3;letter-spacing:0.172px;-webkit-text-stroke:0.7px #e3e3e3;left:400px;">_ga_9R1HHZC8HX</div>
<div style="position:absolute;top:269px;height:40px;line-height:40px;white-space:pre;font-size:24px;color:#e3e3e3;letter-spacing:-0.699px;-webkit-text-stroke:0.7px #e3e3e3;left:678.5px;">GS1.1.1716341675…</div>
<div style="position:absolute;top:269px;height:40px;line-height:40px;white-space:pre;font-size:24px;color:#e3e3e3;letter-spacing:0.612px;-webkit-text-stroke:0.7px #e3e3e3;left:920.5px;">.tina.io</div>
<div style="position:absolute;top:269px;height:40px;line-height:40px;white-space:pre;font-size:24px;color:#e3e3e3;letter-spacing:0.000px;-webkit-text-stroke:0.7px #e3e3e3;left:1037px;">/</div>
<div style="position:absolute;top:269px;height:40px;line-height:40px;white-space:pre;font-size:24px;color:#e3e3e3;letter-spacing:1.286px;-webkit-text-stroke:0.7px #e3e3e3;left:1150.5px;">2025-06-2…</div>
<div style="position:absolute;top:269px;height:40px;line-height:40px;white-space:pre;font-size:24px;color:#e3e3e3;letter-spacing:2.000px;-webkit-text-stroke:0.7px #e3e3e3;right:694.7px;margin-right:-2.000px;">52</div>
<div style="position:absolute;top:269px;height:40px;line-height:40px;white-space:pre;font-size:24px;color:#e3e3e3;letter-spacing:-0.508px;-webkit-text-stroke:0.7px #e3e3e3;left:2010.5px;">Medi…</div>
<div style="position:absolute;top:309px;height:40px;line-height:40px;white-space:pre;font-size:24px;color:#e3e3e3;letter-spacing:0.172px;-webkit-text-stroke:0.7px #e3e3e3;left:400px;">_ga_9R1HHZC8HX</div>
<div style="position:absolute;top:309px;height:40px;line-height:40px;white-space:pre;font-size:24px;color:#e3e3e3;letter-spacing:1.042px;-webkit-text-stroke:0.7px #e3e3e3;left:678.5px;">deleted</div>
<div style="position:absolute;top:309px;height:40px;line-height:40px;white-space:pre;font-size:24px;color:#e3e3e3;letter-spacing:0.826px;-webkit-text-stroke:0.7px #e3e3e3;left:920.5px;">tina.io</div>
<div style="position:absolute;top:309px;height:40px;line-height:40px;white-space:pre;font-size:24px;color:#e3e3e3;letter-spacing:0.000px;-webkit-text-stroke:0.7px #e3e3e3;left:1037px;">/</div>
<div style="position:absolute;top:309px;height:40px;line-height:40px;white-space:pre;font-size:24px;color:#e3e3e3;letter-spacing:1.286px;-webkit-text-stroke:0.7px #e3e3e3;left:1150.5px;">2025-06-0…</div>
<div style="position:absolute;top:309px;height:40px;line-height:40px;white-space:pre;font-size:24px;color:#e3e3e3;letter-spacing:-1.200px;-webkit-text-stroke:0.7px #e3e3e3;right:694.7px;margin-right:1.200px;">21</div>
<div style="position:absolute;top:309px;height:40px;line-height:40px;white-space:pre;font-size:24px;color:#e3e3e3;letter-spacing:-0.508px;-webkit-text-stroke:0.7px #e3e3e3;left:2010.5px;">Medi…</div>
<div style="position:absolute;top:349px;height:40px;line-height:40px;white-space:pre;font-size:24px;color:#e3e3e3;letter-spacing:0.148px;-webkit-text-stroke:0.7px #e3e3e3;left:400px;">_ga_CWDT4HC1M4</div>
<div style="position:absolute;top:349px;height:40px;line-height:40px;white-space:pre;font-size:24px;color:#e3e3e3;letter-spacing:-0.637px;-webkit-text-stroke:0.7px #e3e3e3;left:678.5px;">GS1.1.1716331520…</div>
<div style="position:absolute;top:349px;height:40px;line-height:40px;white-space:pre;font-size:24px;color:#e3e3e3;letter-spacing:0.612px;-webkit-text-stroke:0.7px #e3e3e3;left:920.5px;">.tina.io</div>
<div style="position:absolute;top:349px;height:40px;line-height:40px;white-space:pre;font-size:24px;color:#e3e3e3;letter-spacing:0.000px;-webkit-text-stroke:0.7px #e3e3e3;left:1037px;">/</div>
<div style="position:absolute;top:349px;height:40px;line-height:40px;white-space:pre;font-size:24px;color:#e3e3e3;letter-spacing:1.286px;-webkit-text-stroke:0.7px #e3e3e3;left:1150.5px;">2025-06-2…</div>
<div style="position:absolute;top:349px;height:40px;line-height:40px;white-space:pre;font-size:24px;color:#e3e3e3;letter-spacing:2.000px;-webkit-text-stroke:0.7px #e3e3e3;right:694.7px;margin-right:-2.000px;">52</div>
<div style="position:absolute;top:349px;height:40px;line-height:40px;white-space:pre;font-size:24px;color:#e3e3e3;letter-spacing:-0.508px;-webkit-text-stroke:0.7px #e3e3e3;left:2010.5px;">Medi…</div>
<div style="position:absolute;top:389px;height:40px;line-height:40px;white-space:pre;font-size:24px;color:#e3e3e3;letter-spacing:0.591px;-webkit-text-stroke:0.7px #e3e3e3;left:400px;">ajs_anonymous_id</div>
<div style="position:absolute;top:389px;height:40px;line-height:40px;white-space:pre;font-size:24px;color:#e3e3e3;letter-spacing:1.324px;-webkit-text-stroke:0.7px #e3e3e3;left:678.5px;">0957c480-c0d2-…</div>
<div style="position:absolute;top:389px;height:40px;line-height:40px;white-space:pre;font-size:24px;color:#e3e3e3;letter-spacing:0.612px;-webkit-text-stroke:0.7px #e3e3e3;left:920.5px;">.tina.io</div>
<div style="position:absolute;top:389px;height:40px;line-height:40px;white-space:pre;font-size:24px;color:#e3e3e3;letter-spacing:0.000px;-webkit-text-stroke:0.7px #e3e3e3;left:1037px;">/</div>
<div style="position:absolute;top:389px;height:40px;line-height:40px;white-space:pre;font-size:24px;color:#e3e3e3;letter-spacing:1.223px;-webkit-text-stroke:0.7px #e3e3e3;left:1150.5px;">2025-05-20…</div>
<div style="position:absolute;top:389px;height:40px;line-height:40px;white-space:pre;font-size:24px;color:#e3e3e3;letter-spacing:2.000px;-webkit-text-stroke:0.7px #e3e3e3;right:694.7px;margin-right:-2.000px;">52</div>
<div style="position:absolute;top:389px;height:40px;line-height:40px;white-space:pre;font-size:24px;color:#e3e3e3;letter-spacing:0.148px;-webkit-text-stroke:0.7px #e3e3e3;left:1734.5px;">Lax</div>
<div style="position:absolute;top:389px;height:40px;line-height:40px;white-space:pre;font-size:24px;color:#e3e3e3;letter-spacing:-0.508px;-webkit-text-stroke:0.7px #e3e3e3;left:2010.5px;">Medi…</div>
<div style="position:absolute;top:429px;height:40px;line-height:40px;white-space:pre;font-size:24px;color:#e3e3e3;letter-spacing:0.525px;-webkit-text-stroke:0.7px #e3e3e3;left:400px;">ajs_user_id</div>
<div style="position:absolute;top:429px;height:40px;line-height:40px;white-space:pre;font-size:24px;color:#e3e3e3;letter-spacing:-0.174px;-webkit-text-stroke:0.7px #e3e3e3;left:678.5px;">JoshBerman@ssw…</div>
<div style="position:absolute;top:429px;height:40px;line-height:40px;white-space:pre;font-size:24px;color:#e3e3e3;letter-spacing:0.612px;-webkit-text-stroke:0.7px #e3e3e3;left:920.5px;">.tina.io</div>
<div style="position:absolute;top:429px;height:40px;line-height:40px;white-space:pre;font-size:24px;color:#e3e3e3;letter-spacing:0.000px;-webkit-text-stroke:0.7px #e3e3e3;left:1037px;">/</div>
<div style="position:absolute;top:429px;height:40px;line-height:40px;white-space:pre;font-size:24px;color:#e3e3e3;letter-spacing:1.223px;-webkit-text-stroke:0.7px #e3e3e3;left:1150.5px;">2025-05-20…</div>
<div style="position:absolute;top:429px;height:40px;line-height:40px;white-space:pre;font-size:24px;color:#e3e3e3;letter-spacing:2.000px;-webkit-text-stroke:0.7px #e3e3e3;right:694.7px;margin-right:-2.000px;">32</div>
<div style="position:absolute;top:429px;height:40px;line-height:40px;white-space:pre;font-size:24px;color:#e3e3e3;letter-spacing:0.148px;-webkit-text-stroke:0.7px #e3e3e3;left:1734.5px;">Lax</div>
<div style="position:absolute;top:429px;height:40px;line-height:40px;white-space:pre;font-size:24px;color:#e3e3e3;letter-spacing:-0.508px;-webkit-text-stroke:0.7px #e3e3e3;left:2010.5px;">Medi…</div>
<div style="position:absolute;top:469px;height:40px;line-height:40px;white-space:pre;font-size:24px;color:#c2e7ff;letter-spacing:0.658px;-webkit-text-stroke:0.7px #c2e7ff;left:400px;">consentGiven</div>
<div style="position:absolute;top:469px;height:40px;line-height:40px;white-space:pre;font-size:24px;color:#c2e7ff;letter-spacing:0.417px;-webkit-text-stroke:0.7px #c2e7ff;left:678.5px;">{%22ad_storage…</div>
<div style="position:absolute;top:469px;height:40px;line-height:40px;white-space:pre;font-size:24px;color:#c2e7ff;letter-spacing:0.826px;-webkit-text-stroke:0.7px #c2e7ff;left:920.5px;">tina.io</div>
<div style="position:absolute;top:469px;height:40px;line-height:40px;white-space:pre;font-size:24px;color:#c2e7ff;letter-spacing:0.000px;-webkit-text-stroke:0.7px #c2e7ff;left:1037px;">/</div>
<div style="position:absolute;top:469px;height:40px;line-height:40px;white-space:pre;font-size:24px;color:#c2e7ff;letter-spacing:1.023px;-webkit-text-stroke:0.7px #c2e7ff;left:1150.5px;">2025-07-22…</div>
<div style="position:absolute;top:469px;height:40px;line-height:40px;white-space:pre;font-size:24px;color:#c2e7ff;letter-spacing:-0.023px;-webkit-text-stroke:0.7px #c2e7ff;right:694.7px;margin-right:0.023px;">124</div>
<div style="position:absolute;top:469px;height:40px;line-height:40px;white-space:pre;font-size:24px;color:#c2e7ff;letter-spacing:-0.508px;-webkit-text-stroke:0.7px #c2e7ff;left:2010.5px;">Medi…</div>
<div style="position:absolute;top:509px;height:40px;line-height:40px;white-space:pre;font-size:24px;color:#e3e3e3;letter-spacing:0.997px;-webkit-text-stroke:0.7px #e3e3e3;left:400px;">intercom-device-id-…</div>
<div style="position:absolute;top:509px;height:40px;line-height:40px;white-space:pre;font-size:24px;color:#e3e3e3;letter-spacing:1.057px;-webkit-text-stroke:0.7px #e3e3e3;left:678.5px;">c168e5f5-28ac-4…</div>
<div style="position:absolute;top:509px;height:40px;line-height:40px;white-space:pre;font-size:24px;color:#e3e3e3;letter-spacing:-0.054px;-webkit-text-stroke:0.7px #e3e3e3;left:920.5px;">.cloudi…</div>
<div style="position:absolute;top:509px;height:40px;line-height:40px;white-space:pre;font-size:24px;color:#e3e3e3;letter-spacing:0.000px;-webkit-text-stroke:0.7px #e3e3e3;left:1037px;">/</div>
<div style="position:absolute;top:509px;height:40px;line-height:40px;white-space:pre;font-size:24px;color:#e3e3e3;letter-spacing:1.023px;-webkit-text-stroke:0.7px #e3e3e3;left:1150.5px;">2025-04-13…</div>
<div style="position:absolute;top:509px;height:40px;line-height:40px;white-space:pre;font-size:24px;color:#e3e3e3;letter-spacing:2.000px;-webkit-text-stroke:0.7px #e3e3e3;right:694.7px;margin-right:-2.000px;">63</div>
<div style="position:absolute;top:509px;height:40px;line-height:40px;white-space:pre;font-size:24px;color:#e3e3e3;letter-spacing:0.148px;-webkit-text-stroke:0.7px #e3e3e3;left:1734.5px;">Lax</div>
<div style="position:absolute;top:509px;height:40px;line-height:40px;white-space:pre;font-size:24px;color:#e3e3e3;letter-spacing:-0.508px;-webkit-text-stroke:0.7px #e3e3e3;left:2010.5px;">Medi…</div>
<div style="position:absolute;top:549px;height:40px;line-height:40px;white-space:pre;font-size:24px;color:#e3e3e3;letter-spacing:0.980px;-webkit-text-stroke:0.7px #e3e3e3;left:400px;">intercom-device-id-l…</div>
<div style="position:absolute;top:549px;height:40px;line-height:40px;white-space:pre;font-size:24px;color:#e3e3e3;letter-spacing:0.703px;-webkit-text-stroke:0.7px #e3e3e3;left:678.5px;">31496a64-d6a1-…</div>
<div style="position:absolute;top:549px;height:40px;line-height:40px;white-space:pre;font-size:24px;color:#e3e3e3;letter-spacing:0.612px;-webkit-text-stroke:0.7px #e3e3e3;left:920.5px;">.tina.io</div>
<div style="position:absolute;top:549px;height:40px;line-height:40px;white-space:pre;font-size:24px;color:#e3e3e3;letter-spacing:0.000px;-webkit-text-stroke:0.7px #e3e3e3;left:1037px;">/</div>
<div style="position:absolute;top:549px;height:40px;line-height:40px;white-space:pre;font-size:24px;color:#e3e3e3;letter-spacing:0.923px;-webkit-text-stroke:0.7px #e3e3e3;left:1150.5px;">2025-02-14…</div>
<div style="position:absolute;top:549px;height:40px;line-height:40px;white-space:pre;font-size:24px;color:#e3e3e3;letter-spacing:2.000px;-webkit-text-stroke:0.7px #e3e3e3;right:694.7px;margin-right:-2.000px;">63</div>
<div style="position:absolute;top:549px;height:40px;line-height:40px;white-space:pre;font-size:24px;color:#e3e3e3;letter-spacing:0.148px;-webkit-text-stroke:0.7px #e3e3e3;left:1734.5px;">Lax</div>
<div style="position:absolute;top:549px;height:40px;line-height:40px;white-space:pre;font-size:24px;color:#e3e3e3;letter-spacing:-0.508px;-webkit-text-stroke:0.7px #e3e3e3;left:2010.5px;">Medi…</div>
<div style="position:absolute;top:589px;height:40px;line-height:40px;white-space:pre;font-size:24px;color:#e3e3e3;letter-spacing:1.275px;-webkit-text-stroke:0.7px #e3e3e3;left:400px;">intercom-id-lu8gsps6</div>
<div style="position:absolute;top:589px;height:40px;line-height:40px;white-space:pre;font-size:24px;color:#e3e3e3;letter-spacing:0.917px;-webkit-text-stroke:0.7px #e3e3e3;left:678.5px;">75287ea9-994a-…</div>
<div style="position:absolute;top:589px;height:40px;line-height:40px;white-space:pre;font-size:24px;color:#e3e3e3;letter-spacing:0.612px;-webkit-text-stroke:0.7px #e3e3e3;left:920.5px;">.tina.io</div>
<div style="position:absolute;top:589px;height:40px;line-height:40px;white-space:pre;font-size:24px;color:#e3e3e3;letter-spacing:0.000px;-webkit-text-stroke:0.7px #e3e3e3;left:1037px;">/</div>
<div style="position:absolute;top:589px;height:40px;line-height:40px;white-space:pre;font-size:24px;color:#e3e3e3;letter-spacing:0.923px;-webkit-text-stroke:0.7px #e3e3e3;left:1150.5px;">2025-02-14…</div>
<div style="position:absolute;top:589px;height:40px;line-height:40px;white-space:pre;font-size:24px;color:#e3e3e3;letter-spacing:2.000px;-webkit-text-stroke:0.7px #e3e3e3;right:694.7px;margin-right:-2.000px;">56</div>
<div style="position:absolute;top:589px;height:40px;line-height:40px;white-space:pre;font-size:24px;color:#e3e3e3;letter-spacing:0.148px;-webkit-text-stroke:0.7px #e3e3e3;left:1734.5px;">Lax</div>
<div style="position:absolute;top:589px;height:40px;line-height:40px;white-space:pre;font-size:24px;color:#e3e3e3;letter-spacing:-0.508px;-webkit-text-stroke:0.7px #e3e3e3;left:2010.5px;">Medi…</div>
<div style="position:absolute;top:629px;height:40px;line-height:40px;white-space:pre;font-size:24px;color:#e3e3e3;letter-spacing:0.698px;-webkit-text-stroke:0.7px #e3e3e3;left:400px;">intercom-session-av…</div>
<div style="position:absolute;top:629px;height:40px;line-height:40px;white-space:pre;font-size:24px;color:#e3e3e3;letter-spacing:-0.421px;-webkit-text-stroke:0.7px #e3e3e3;left:678.5px;">WFVBZ2FQdGE5…</div>
<div style="position:absolute;top:629px;height:40px;line-height:40px;white-space:pre;font-size:24px;color:#e3e3e3;letter-spacing:-0.054px;-webkit-text-stroke:0.7px #e3e3e3;left:920.5px;">.cloudi…</div>
<div style="position:absolute;top:629px;height:40px;line-height:40px;white-space:pre;font-size:24px;color:#e3e3e3;letter-spacing:0.000px;-webkit-text-stroke:0.7px #e3e3e3;left:1037px;">/</div>
<div style="position:absolute;top:629px;height:40px;line-height:40px;white-space:pre;font-size:24px;color:#e3e3e3;letter-spacing:1.023px;-webkit-text-stroke:0.7px #e3e3e3;left:1150.5px;">2024-07-24…</div>
<div style="position:absolute;top:629px;height:40px;line-height:40px;white-space:pre;font-size:24px;color:#e3e3e3;letter-spacing:-0.273px;-webkit-text-stroke:0.7px #e3e3e3;right:694.7px;margin-right:0.273px;">187</div>
<div style="position:absolute;top:629px;height:40px;line-height:40px;white-space:pre;font-size:24px;color:#e3e3e3;letter-spacing:0.148px;-webkit-text-stroke:0.7px #e3e3e3;left:1734.5px;">Lax</div>
<div style="position:absolute;top:629px;height:40px;line-height:40px;white-space:pre;font-size:24px;color:#e3e3e3;letter-spacing:-0.508px;-webkit-text-stroke:0.7px #e3e3e3;left:2010.5px;">Medi…</div>
<div style="position:absolute;top:1240.3px;height:40px;line-height:40px;white-space:pre;font-size:22px;color:#ececec;letter-spacing:0.936px;-webkit-text-stroke:0.55px #ececec;left:878px;">Application</div>
<div style="position:absolute;top:1323px;height:40px;line-height:40px;white-space:pre;font-size:24px;color:#e3e3e3;letter-spacing:0.510px;font-weight:700;-webkit-text-stroke:0.7px #e3e3e3;left:370px;">Cookie Value</div>
<div style="position:absolute;top:1323px;height:40px;line-height:40px;white-space:pre;font-size:24px;color:#e3e3e3;letter-spacing:0.547px;-webkit-text-stroke:0.7px #e3e3e3;left:594px;">Show URL-decoded</div>
<div style="position:absolute;top:1363px;height:40px;line-height:40px;white-space:pre;font-size:24px;color:#e3e3e3;letter-spacing:0.883px;-webkit-text-stroke:0.7px #e3e3e3;left:370px;">{"ad_storage":true,"ad_personalization":true,"analytics_storage":true,"ad_user_data":true}</div>
</div>
</body></html>
